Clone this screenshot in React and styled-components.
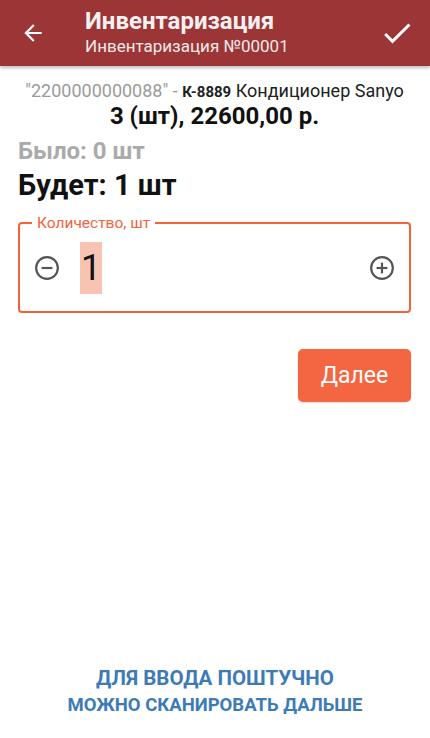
import React, { useState } from 'react'
import styled, { createGlobalStyle } from 'styled-components'

const GlobalStyle = createGlobalStyle`
  html, body {
    margin: 0;
    padding: 0;
    background: #ffffff;
    font-family: Roboto, "Noto Sans", sans-serif;
  }
  #root {
    min-height: 738px;
  }
`

function BackIcon() {
  return (
    <svg width="26" height="26" viewBox="0 0 24 24">
      <path d="M20 11H7.83l5.59-5.59L12 4l-8 8 8 8 1.41-1.41L7.83 13H20v-2z" fill="#fff" />
    </svg>
  )
}

function CheckIcon() {
  return (
    <svg width="36" height="36" viewBox="0 0 24 24">
      <path d="M9 16.17L4.83 12l-1.42 1.41L9 19 21 7l-1.41-1.41z" fill="#fff" />
    </svg>
  )
}

function CircleSign({ plus }) {
  return (
    <svg width="26" height="26" viewBox="0 0 24 24">
      <circle cx="12" cy="12" r="10" fill="none" stroke="#555" strokeWidth="2" />
      <path d="M7 12h10" stroke="#555" strokeWidth="2" />
      {plus && <path d="M12 7v10" stroke="#555" strokeWidth="2" />}
    </svg>
  )
}

function App() {
  const [count, setCount] = useState(1)
  return (
    <Page>
      <GlobalStyle />
      <Toolbar>
        <IconButton><BackIcon /></IconButton>
        <Titles>
          <Title>Инвентаризация</Title>
          <Subtitle>Инвентаризация №00001</Subtitle>
        </Titles>
        <IconButton><CheckIcon /></IconButton>
      </Toolbar>
      <Content>
        <ProductLine>
          <Barcode>"2200000000088" - </Barcode>
          <Article>К-8889</Article> Кондиционер Sanyo
        </ProductLine>
        <PriceLine>3 (шт), 22600,00 р.</PriceLine>
        <Status $muted>Было: 0 шт</Status>
        <Status>Будет: {count} шт</Status>
        <Field>
          <Legend>Количество, шт</Legend>
          <StepButton onClick={() => setCount(Math.max(0, count - 1))}><CircleSign /></StepButton>
          <Value><Selected>{count}</Selected></Value>
          <StepButton onClick={() => setCount(count + 1)}><CircleSign plus /></StepButton>
        </Field>
        <Actions>
          <NextButton>Далее</NextButton>
        </Actions>
      </Content>
      <Hint>
        <HintLine>ДЛЯ ВВОДА ПОШТУЧНО</HintLine>
        <HintLine $small>МОЖНО СКАНИРОВАТЬ ДАЛЬШЕ</HintLine>
      </Hint>
    </Page>
  )
}

const Page = styled.div`
  display: flex;
  flex-direction: column;
  height: 738px;
  overflow: hidden;
`

const Toolbar = styled.div`
  display: flex;
  align-items: center;
  height: 66px;
  background-color: #9b3536;
  box-shadow: 0 2px 3px rgba(0, 0, 0, 0.25);
  padding: 0 15px 0 15px;
  color: #fff;
  flex-shrink: 0;
`

const IconButton = styled.div`
  display: flex;
  align-items: center;
  justify-content: center;
  width: 36px;
  height: 36px;
`

const Titles = styled.div`
  flex: 1;
  display: flex;
  flex-direction: column;
  padding-left: 34px;
  margin-top: -2px;
`

const Title = styled.div`
  font-size: 24px;
  font-weight: 700;
  line-height: 28px;
  color: #f4f0f0;
`

const Subtitle = styled.div`
  font-size: 17px;
  line-height: 22px;
  color: #f1e9e9;
`

const Content = styled.div`
  display: flex;
  flex-direction: column;
  padding: 14px 19px 0 18px;
`

const ProductLine = styled.div`
  text-align: center;
  font-size: 18px;
  line-height: 22px;
  color: #202020;
  white-space: nowrap;
`

const Barcode = styled.span`
  color: #9a9a9a;
`

const Article = styled.span`
  font-weight: 700;
  font-size: 15px;
`

const PriceLine = styled.div`
  text-align: center;
  font-size: 24px;
  font-weight: 700;
  line-height: 27px;
  color: #111;
`

const Status = styled.div`
  font-size: ${p => (p.$muted ? '24px' : '29px')};
  font-weight: 700;
  line-height: ${p => (p.$muted ? '30px' : '34px')};
  margin-top: ${p => (p.$muted ? '6px' : '2px')};
  color: ${p => (p.$muted ? '#aaaaaa' : '#111')};
`

const Field = styled.div`
  position: relative;
  box-sizing: border-box;
  display: flex;
  align-items: center;
  margin-top: 20px;
  height: 91px;
  border: 2px solid #f4623a;
  border-radius: 4px;
  padding: 0 14px 0 14px;
`

const Legend = styled.span`
  position: absolute;
  top: -10px;
  left: 12px;
  padding: 0 5px;
  background: #fff;
  font-size: 15.5px;
  line-height: 18px;
  color: #f4623a;
`

const StepButton = styled.div`
  display: flex;
  align-items: center;
  justify-content: center;
  width: 26px;
  height: 26px;
  cursor: pointer;
`

const Value = styled.div`
  flex: 1;
  padding-left: 20px;
  display: flex;
  align-items: center;
`

const Selected = styled.span`
  display: inline-block;
  background-color: #f9c3b4;
  font-size: 36px;
  line-height: 52px;
  padding: 0 1px;
  color: #111;
`

const Actions = styled.div`
  display: flex;
  justify-content: flex-end;
  margin-top: 36px;
`

const NextButton = styled.button`
  width: 113px;
  height: 53px;
  border: none;
  border-radius: 5px;
  background-color: #f46641;
  color: #fff;
  font-family: Roboto, sans-serif;
  font-size: 23px;
  box-shadow: 0 1px 2px rgba(0, 0, 0, 0.15);
`

const Hint = styled.div`
  margin-top: auto;
  padding-bottom: 19px;
  display: flex;
  flex-direction: column;
  align-items: center;
`

const HintLine = styled.div`
  font-size: ${p => (p.$small ? '18.5px' : '20.5px')};
  font-weight: 700;
  line-height: 27px;
  color: #3d7bb6;
`

export default App
